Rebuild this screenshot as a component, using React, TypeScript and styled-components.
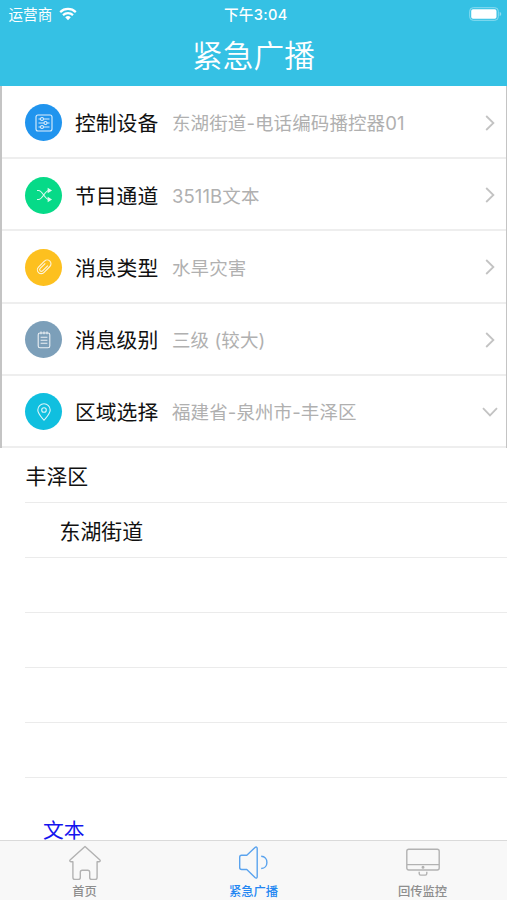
import React from "react";
import styled, { createGlobalStyle, css } from "styled-components";

const GlobalStyle = createGlobalStyle`
  * {
    box-sizing: border-box;
  }
  body {
    margin: 0;
    background: #fff;
    overflow: hidden;
    font-family: Inter, "Noto Sans CJK SC", sans-serif;
  }
`;

/* row icons, drawn on an 18px grid */
const PanelIcon = () => (
  <RowSvg viewBox="0 0 18 18">
    <rect x="1" y="1" width="16" height="16" rx="2" />
    <path d="M3.5 5h2M8.5 5h6M3.5 9h5.5M12 9h2.5M3.5 13h2M8.5 13h6" />
    <circle cx="7" cy="5" r="1.5" />
    <circle cx="10.5" cy="9" r="1.5" />
    <circle cx="7" cy="13" r="1.5" />
  </RowSvg>
);

const ShuffleIcon = () => (
  <RowSvg viewBox="0 0 18 18">
    <path d="M2 4.500h1.500c2 0 3.200 1.500 5.200 4.500s3.300 4.500 5.300 4.500h1M2 13.500h1.500c2 0 3.200-1.500 5.200-4.500s3.300-4.500 5.300-4.500h1" />
    <path d="M13.200 2.800 16 4.500l-2.800 1.700zM13.200 11.800 16 13.500l-2.800 1.700z" fill="currentColor" />
  </RowSvg>
);

const ClipIcon = () => (
  <RowSvg viewBox="0 0 18 18">
    <g transform="rotate(45 9 9)">
      <path d="M5.200 5v8a3.800 3.800 0 0 0 7.600 0V4.500a3.800 3.800 0 0 0-7.600 0z" />
      <path d="M7.300 5.500v7.200a1.700 1.700 0 0 0 3.400 0V5.200" />
    </g>
  </RowSvg>
);

const NoteIcon = () => (
  <RowSvg viewBox="0 0 18 18">
    <rect x="3.200" y="2" width="11.600" height="14.800" rx="1.800" />
    <path d="M6 .6v2.600M9 .6v2.600M12 .6v2.600M5.600 6.300h6.800M5.600 9.300h6.800M5.600 12.300h6.800" />
  </RowSvg>
);

const PinIcon = () => (
  <RowSvg viewBox="0 0 18 18">
    <path d="M9 17.200C6.200 13.700 2.800 10.500 2.800 6.900a6.200 6.200 0 0 1 12.400 0c0 3.600-3.400 6.800-6.200 10.300z" />
    <circle cx="9" cy="7" r="2.300" />
  </RowSvg>
);

const settings = [
  { label: "控制设备", value: "东湖街道-电话编码播控器01", color: "#2094ee", icon: <PanelIcon /> },
  { label: "节目通道", value: "3511B文本", color: "#06da88", icon: <ShuffleIcon /> },
  { label: "消息类型", value: "水旱灾害", color: "#fdc01f", icon: <ClipIcon /> },
  { label: "消息级别", value: "三级 (较大)", color: "#7c9fb9", icon: <NoteIcon /> },
  { label: "区域选择", value: "福建省-泉州市-丰泽区", color: "#10bfdf", icon: <PinIcon />, open: true },
];

const regions = [
  { name: "丰泽区", level: 0 },
  { name: "东湖街道", level: 1 },
  { name: "", level: 0 },
  { name: "", level: 0 },
  { name: "", level: 0 },
  { name: "", level: 0 },
];

const App = () => (
  <Screen>
    <GlobalStyle />
    <Header>
      <StatusBar>
        <Carrier>
          运营商
          <svg width="18" height="14" viewBox="0 0 18 14">
            <g fill="none" stroke="#fff" strokeWidth="2.200">
              <path d="M1.200 5.100a11.200 11.200 0 0 1 15.600 0" />
              <path d="M4 8.100a7.200 7.200 0 0 1 10 0" />
            </g>
            <path d="M6.200 10.300a4 4 0 0 1 5.600 0L9 13.200z" fill="#fff" />
          </svg>
        </Carrier>
        <Clock>下午3:04</Clock>
        <Battery>
          <svg width="33" height="14" viewBox="0 0 33 14">
            <rect x=".7" y=".7" width="28.600" height="12.600" rx="3.500" fill="none" stroke="#8bdcf0" />
            <rect x="2.200" y="2.300" width="25.300" height="9.400" rx="1.800" fill="#fff" />
            <path d="M30.700 5v4c1-.4 1.500-1.100 1.500-2s-.5-1.600-1.500-2z" fill="#8bdcf0" />
          </svg>
        </Battery>
      </StatusBar>
      <Title>紧急广播</Title>
    </Header>

    <Settings>
      {settings.map((s) => (
        <SettingRow key={s.label}>
          <IconDisc $color={s.color}>{s.icon}</IconDisc>
          <Label>{s.label}</Label>
          <Value>{s.value}</Value>
          <Chevron viewBox="0 0 16 16" $open={s.open}>
            <path d="M4.200 1l7.200 7-7.200 7" />
          </Chevron>
        </SettingRow>
      ))}
    </Settings>

    <RegionList>
      {regions.map((r, i) => (
        <Region key={i} $level={r.level}>
          {r.name}
        </Region>
      ))}
      <ContentType>文本</ContentType>
    </RegionList>

    <TabBar>
      <Tab>
        <svg width="34" height="36" viewBox="0 0 34 36">
          <path d="M17 1.500 2.300 14.700c-1 .9-.5 2 .6 2h2v15.500c0 1.500.7 2.200 2 2.200h3.400c1.300 0 2-.8 2-2v-5.200c0-1.400.7-2 2-2h5.400c1.300 0 2 .6 2 2v5.200c0 1.200.7 2 2 2h3.400c1.300 0 2-.7 2-2.200V16.700h2c1.100 0 1.600-1.100.6-2z" />
        </svg>
        首页
      </Tab>
      <Tab $active>
        <svg width="34" height="36" viewBox="0 0 34 36">
          <path d="M4.500 10.300h5.300l8.200-7.700c1.100-1 2.200-.6 2.200.9v28.200c0 1.500-1.100 1.900-2.200.9l-8.200-8.100H4.700c-1.200 0-2-.7-2-2v-10.200c0-1.300.6-2 1.800-2zM24.200 11.300c7.600.2 7.600 12 0 12.200" />
        </svg>
        紧急广播
      </Tab>
      <Tab>
        <svg width="34" height="36" viewBox="0 0 34 36">
          <rect x=".8" y="4.300" width="32.400" height="20.700" rx="2" />
          <path d="M1 19.600h32M13.200 26.800v1.700c0 1 .5 1.600 1.500 1.600h4.600c1 0 1.500-.6 1.500-1.600v-1.700" />
          <circle cx="17" cy="22.300" r=".8" />
        </svg>
        回传监控
      </Tab>
    </TabBar>
  </Screen>
);

export default App;

// Styled Components
const Screen = styled.div`
  display: flex;
  flex-direction: column;
  width: 507px;
  height: 900px;
  background: #fff;
`;

const Header = styled.header`
  flex: none;
  height: 86.4px;
  background: #35c1e4;
  color: #fff;
`;

const StatusBar = styled.div`
  display: grid;
  grid-template-columns: 1fr auto 1fr;
  align-items: center;
  height: 27px;
  padding: 0 5px 0 8.5px;
  font-size: 14.6px;
`;

const Carrier = styled.div`
  display: flex;
  align-items: center;
  gap: 7px;
`;

const Clock = styled.div`
  padding-left: 1px;
  font-weight: 500;
  letter-spacing: 0.3px;
`;

const Battery = styled.div`
  display: flex;
  justify-content: flex-end;
`;

const Title = styled.h1`
  margin: 0;
  line-height: 58px;
  font-size: 30.7px;
  font-weight: 350;
  text-align: center;
`;

const Settings = styled.section`
  flex: none;
  border: solid #c4c4c4;
  border-width: 0 1px 0 2px;
`;

const SettingRow = styled.div`
  display: flex;
  align-items: center;
  height: 72.2px;
  padding: 2px 8.5px 0 23px;
  border-bottom: 2px solid #eee;

  &:first-child {
    height: 72.8px;
  }
`;

const IconDisc = styled.div<{ $color: string }>`
  display: flex;
  align-items: center;
  justify-content: center;
  width: 37px;
  height: 37px;
  border-radius: 50%;
  color: #fff;
  background: ${(p) => p.$color};
`;

const RowSvg = styled.svg`
  width: 18px;
  height: 18px;
  fill: none;
  stroke: currentColor;
  stroke-width: 1.1;
  opacity: 0.85;
`;

const Label = styled.div`
  width: 97px;
  margin-left: 13px;
  padding-bottom: 1px;
  font-size: 20.8px;
  color: #111;
`;

const Value = styled.div`
  flex: 1;
  padding-bottom: 1px;
  font-size: 18.5px;
  letter-spacing: 0.1px;
  color: #b0b0b0;
  white-space: nowrap;
`;

const Chevron = styled.svg<{ $open?: boolean }>`
  width: 16px;
  height: 16px;
  fill: none;
  stroke: #c3c3c3;
  stroke-width: 1.8;
  ${(p) =>
    p.$open &&
    css`
      transform: rotate(90deg);
    `}
`;

const RegionList = styled.section`
  flex: 1;
  min-height: 0;
  overflow: hidden;
  padding-left: 25px;
`;

const Region = styled.div<{ $level: number }>`
  display: flex;
  align-items: center;
  height: 55px;
  padding-left: ${(p) => p.$level * 34 + 0.5}px;
  border-bottom: 1.5px solid #ebebeb;
  font-size: 20.9px;
  color: #111;
`;

const ContentType = styled.div`
  padding: 43px 0 0 18px;
  font-size: 20.8px;
  line-height: 19px;
  color: #1414ee;
`;

const TabBar = styled.nav`
  display: grid;
  grid-template-columns: repeat(3, 1fr);
  flex: none;
  height: 60px;
  background: #f8f8f8;
  border-top: 1px solid #dadada;
`;

const Tab = styled.div<{ $active?: boolean }>`
  display: flex;
  flex-direction: column;
  align-items: center;
  padding-top: 4px;
  font-size: 12.3px;
  font-weight: 500;
  line-height: 22px;
  color: ${(p) => (p.$active ? "#2286f2" : "#8e8e8e")};

  svg {
    flex: none;
    fill: none;
    stroke: ${(p) => (p.$active ? "#5aa3ee" : "#b2b2b2")};
    stroke-width: 1.4;
    stroke-linejoin: round;
  }
`;
